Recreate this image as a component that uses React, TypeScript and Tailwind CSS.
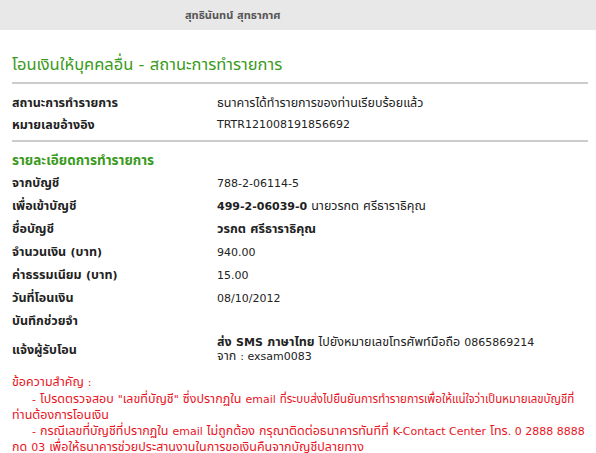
const font = { fontFamily: 'Tahoma, "DejaVu Sans", "Noto Sans Thai", "Noto Sans", sans-serif' }

// latin runs stay at 11px, thai text around them is set larger to match its width
function L(props: { children: React.ReactNode; bold?: boolean }) {
  return <span className={'text-[11px] ' + (props.bold ? 'font-bold' : '')}>{props.children}</span>
}

function Row(props: { label: React.ReactNode; children?: React.ReactNode; className?: string }) {
  return (
    <div className={'grid grid-cols-[205px_1fr] items-center ' + (props.className ?? 'h-[23px]')}>
      <div className="font-bold text-[#222]">{props.label}</div>
      <div className="text-[#222]">{props.children}</div>
    </div>
  )
}

export default function App() {
  return (
    <div className="w-[596px] h-[453px] bg-white text-[12.5px] leading-[13px]" style={font}>
      <div className="h-[30px] bg-[#e8e8e8] flex items-center pl-[185px] text-[11px] font-bold text-[#555]">
        สุทธินันทน์ สุทธากาศ
      </div>

      <div className="pl-[12px] pr-[8px]">
        <h1 className="mt-[25px] text-[16.5px] leading-[20px] text-[#3a9a22]">
          โอนเงินให้บุคคลอื่น - สถานะการทำรายการ
        </h1>
        <div className="mt-[7px] h-[2px] bg-[#cccccc]" />

        <div className="pt-[7px]">
          <Row label="สถานะการทำรายการ" className="h-[22px]">ธนาคารได้ทำรายการของท่านเรียบร้อยแล้ว</Row>
          <Row label="หมายเลขอ้างอิง" className="h-[22px]">
            <L>TRTR121008191856692</L>
          </Row>
        </div>
        <div className="mt-[5px] h-[2px] bg-[#cccccc]" />

        <div className="pt-[7px]">
          <div className="h-[22px] flex items-center font-bold text-[13.5px] text-[#3a9a22]">รายละเอียดการทำรายการ</div>
          <Row label="จากบัญชี">
            <L>788-2-06114-5</L>
          </Row>
          <Row label="เพื่อเข้าบัญชี">
            <L bold>499-2-06039-0</L> นายวรกต ศรีธาราธิคุณ
          </Row>
          <Row label="ชื่อบัญชี">
            <span className="font-bold">วรกต ศรีธาราธิคุณ</span>
          </Row>
          <Row label={<>จำนวนเงิน <L bold>(</L>บาท<L bold>)</L></>}>
            <L>940.00</L>
          </Row>
          <Row label={<>ค่าธรรมเนียม <L bold>(</L>บาท<L bold>)</L></>}>
            <L>15.00</L>
          </Row>
          <Row label="วันที่โอนเงิน">
            <L>08/10/2012</L>
          </Row>
          <Row label="บันทึกช่วยจำ" />
          <Row label="แจ้งผู้รับโอน" className="h-[30px] mt-[2px]">
            <div>
              <span className="font-bold">
                ส่ง <L bold>SMS</L> ภาษาไทย
              </span>{' '}
              ไปยังหมายเลขโทรศัพท์มือถือ <L>0865869214</L>
            </div>
            <div>
              จาก <L>: exsam0083</L>
            </div>
          </Row>
        </div>

        <div className="mt-[10px] text-[#e8141e] leading-[15.5px]">
          <p>ข้อความสำคัญ <L>:</L></p>
          <p>
            <span className="inline-block w-[20px]" />
            <L>-</L> โปรดตรวจสอบ <L>"</L>เลขที่บัญชี<L>"</L> ซึ่งปรากฏใน <L>email</L>{' '}
            <span className="text-[11.5px]">ที่ระบบส่งไปยืนยันการทำรายการเพื่อให้แน่ใจว่าเป็นหมายเลขบัญชีที่</span>
            <br />
            ท่านต้องการโอนเงิน
          </p>
          <p>
            <span className="inline-block w-[20px]" />
            <L>-</L> กรณีเลขที่บัญชีที่ปรากฏใน <L>email</L> ไม่ถูกต้อง กรุณาติดต่อธนาคารทันทีที่{' '}
            <L>K-Contact Center</L> โทร<L>. 0 2888 8888</L>
            <br />
            กด <L>03</L> เพื่อให้ธนาคารช่วยประสานงานในการขอเงินคืนจากบัญชีปลายทาง
          </p>
        </div>
      </div>
    </div>
  )
}
